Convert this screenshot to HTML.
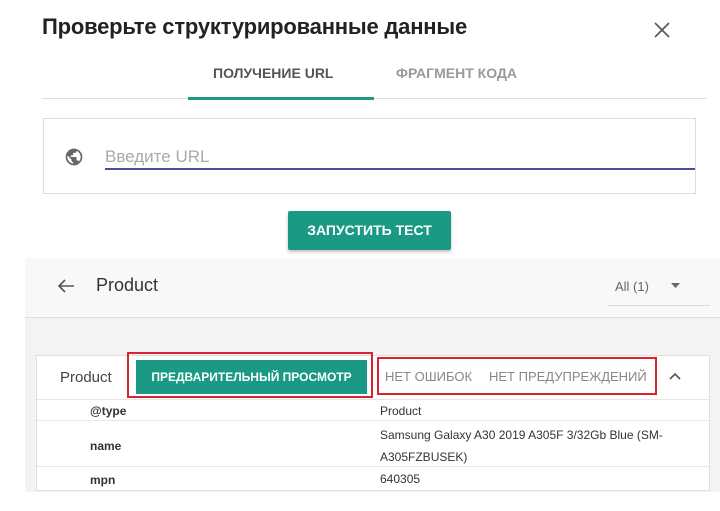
<!DOCTYPE html>
<html><head><meta charset="utf-8"><style>
*{margin:0;padding:0;box-sizing:border-box}
body{width:720px;height:511px;background:#fff;font-family:"Liberation Sans",sans-serif;position:relative;overflow:hidden;color:#222}
.a{position:absolute;white-space:nowrap}
</style></head><body>
<div class="a" style="left:42px;top:14px;font-size:22px;font-weight:bold;color:#222;letter-spacing:-0.2px">Проверьте структурированные данные</div>
<svg class="a" style="left:654px;top:22px" width="16" height="16" viewBox="0 0 16 16"><path d="M1 1L15 15M15 1L1 15" stroke="#555" stroke-width="1.6"/></svg>
<div class="a" style="left:213px;top:65px;font-size:14px;font-weight:bold;color:#555">ПОЛУЧЕНИЕ URL</div>
<div class="a" style="left:396px;top:65px;font-size:14px;font-weight:bold;color:#999">ФРАГМЕНТ КОДА</div>
<div class="a" style="left:42px;top:98px;width:665px;height:1px;background:#ddd"></div>
<div class="a" style="left:188px;top:97px;width:186px;height:3px;background:#1a9a85"></div>
<div class="a" style="left:43px;top:118px;width:653px;height:76px;border:1.5px solid #ddd"></div>
<svg class="a" style="left:64px;top:147px" width="20" height="20" viewBox="0 0 24 24"><path fill="#666" d="M12 2a10 10 0 100 20 10 10 0 000-20zm-1 17.9A8 8 0 014.2 10.2L9 15v1a2 2 0 002 2zm6.9-2.5A2 2 0 0016 16h-1v-3a1 1 0 00-1-1H8v-2h2a1 1 0 001-1V7h2a2 2 0 002-2v-.4a8 8 0 012.9 12.8z"/></svg>
<div class="a" style="left:105px;top:147px;font-size:17px;color:#aaa">Введите URL</div>
<div class="a" style="left:105px;top:168px;width:590px;height:2px;background:#4a4f9a"></div>
<div class="a" style="left:288px;top:211px;width:163px;height:39px;background:#1a9a85;border-radius:2px;box-shadow:0 2px 3px rgba(0,0,0,.25);color:#fff;font-size:14px;font-weight:bold;text-align:center;line-height:39px">ЗАПУСТИТЬ ТЕСТ</div>
<div class="a" style="left:25px;top:258px;width:695px;height:234px;background:#f3f3f3"></div>
<div class="a" style="left:25px;top:258px;width:695px;height:60px;background:#f8f8f8;border-bottom:1px solid #ddd"></div>
<svg class="a" style="left:57px;top:278px" width="18" height="16" viewBox="0 0 18 16"><path d="M17 8H2M8 2L2 8l6 6" stroke="#555" stroke-width="1.6" fill="none"/></svg>
<div class="a" style="left:96px;top:275px;font-size:18px;color:#333">Product</div>
<div class="a" style="left:615px;top:279px;font-size:13px;color:#666">All (1)</div>
<svg class="a" style="left:671px;top:283px" width="9" height="6" viewBox="0 0 9 6"><path d="M0 0h9L4.5 5z" fill="#666"/></svg>
<div class="a" style="left:607px;top:305px;width:103px;height:1px;background:#ddd"></div>
<div class="a" style="left:36px;top:355px;width:674px;height:136px;background:#fff;border:1px solid #e0e0e0"></div>
<div class="a" style="left:60px;top:369px;font-size:15px;color:#444">Product</div>
<div class="a" style="left:127px;top:352px;width:246px;height:46px;border:2px solid #d9232d"></div>
<div class="a" style="left:136px;top:360px;width:231px;height:34px;background:#1a9a85;color:#fff;font-size:12px;font-weight:bold;text-align:center;line-height:34px">ПРЕДВАРИТЕЛЬНЫЙ ПРОСМОТР</div>
<div class="a" style="left:377px;top:357px;width:280px;height:38px;border:2px solid #d9232d"></div>
<div class="a" style="left:385px;top:369px;font-size:13px;color:#888">НЕТ ОШИБОК</div>
<div class="a" style="left:489px;top:369px;font-size:13px;color:#888">НЕТ ПРЕДУПРЕЖДЕНИЙ</div>
<svg class="a" style="left:669px;top:372px" width="12" height="8" viewBox="0 0 12 8"><path d="M1 7l5-5 5 5" stroke="#555" stroke-width="1.6" fill="none"/></svg>
<div class="a" style="left:37px;top:399px;width:672px;height:1px;background:#e6e6e6"></div>
<div class="a" style="left:90px;top:404px;font-size:12px;font-weight:bold;color:#333">@type</div>
<div class="a" style="left:380px;top:404px;font-size:12px;color:#333">Product</div>
<div class="a" style="left:37px;top:420px;width:672px;height:1px;background:#e6e6e6"></div>
<div class="a" style="left:90px;top:439px;font-size:12px;font-weight:bold;color:#333">name</div>
<div class="a" style="left:380px;top:424px;font-size:12px;color:#333;line-height:22px">Samsung Galaxy A30 2019 A305F 3/32Gb Blue (SM-<br>A305FZBUSEK)</div>
<div class="a" style="left:37px;top:466px;width:672px;height:1px;background:#e6e6e6"></div>
<div class="a" style="left:90px;top:473px;font-size:12px;font-weight:bold;color:#333">mpn</div>
<div class="a" style="left:380px;top:472px;font-size:12px;color:#333">640305</div>
</body></html>
